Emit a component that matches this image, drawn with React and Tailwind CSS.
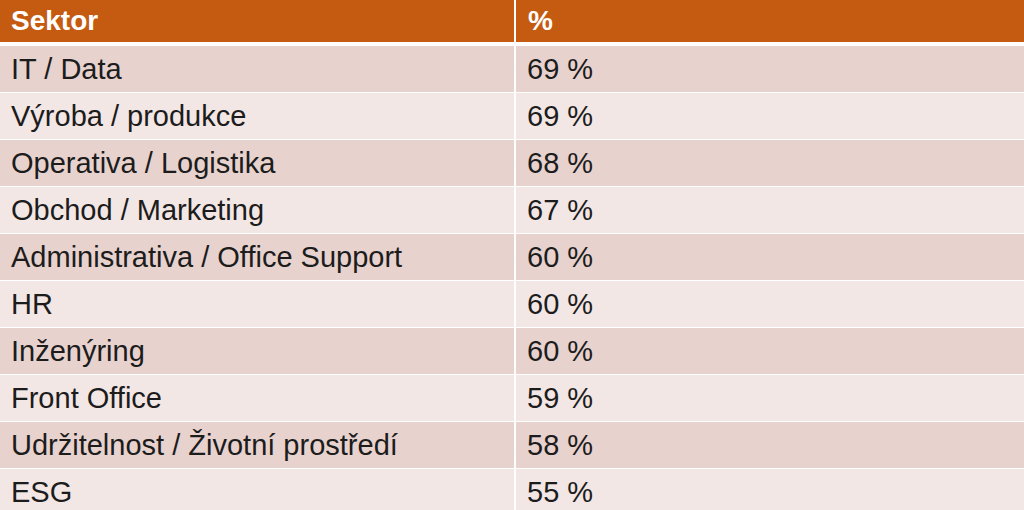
const rows = [
  ["IT / Data", "69 %"],
  ["Výroba / produkce", "69 %"],
  ["Operativa / Logistika", "68 %"],
  ["Obchod / Marketing", "67 %"],
  ["Administrativa / Office Support", "60 %"],
  ["HR", "60 %"],
  ["Inženýring", "60 %"],
  ["Front Office", "59 %"],
  ["Udržitelnost / Životní prostředí", "58 %"],
  ["ESG", "55 %"],
];

export default function App() {
  return (
    <div className="w-[1024px] h-[510px] overflow-hidden bg-white font-['Liberation_Sans',Arial,sans-serif]">
      <div className="grid grid-cols-[514px_1fr] gap-x-[2px] h-[41px] bg-white">
        <div className="bg-[#c55a11] text-white font-bold text-[28px] leading-[42px] pl-[11px]">Sektor</div>
        <div className="bg-[#c55a11] text-white font-bold text-[28px] leading-[42px] pl-[12px]">%</div>
      </div>
      <div className="flex flex-col gap-[2px] pt-[5px]">
        {rows.map(([name, pct], i) => (
          <div key={name} className="grid grid-cols-[514px_1fr] gap-x-[2px] h-[45px] text-[29px] text-[#1c1c1c]">
            <div className={`${i % 2 === 0 ? "bg-[#e8d2ce]" : "bg-[#f3e7e5]"} pl-[11px] leading-[46px] whitespace-nowrap`}>{name}</div>
            <div className={`${i % 2 === 0 ? "bg-[#e8d2ce]" : "bg-[#f3e7e5]"} pl-[11px] leading-[46px]`}>{pct}</div>
          </div>
        ))}
      </div>
    </div>
  );
}
